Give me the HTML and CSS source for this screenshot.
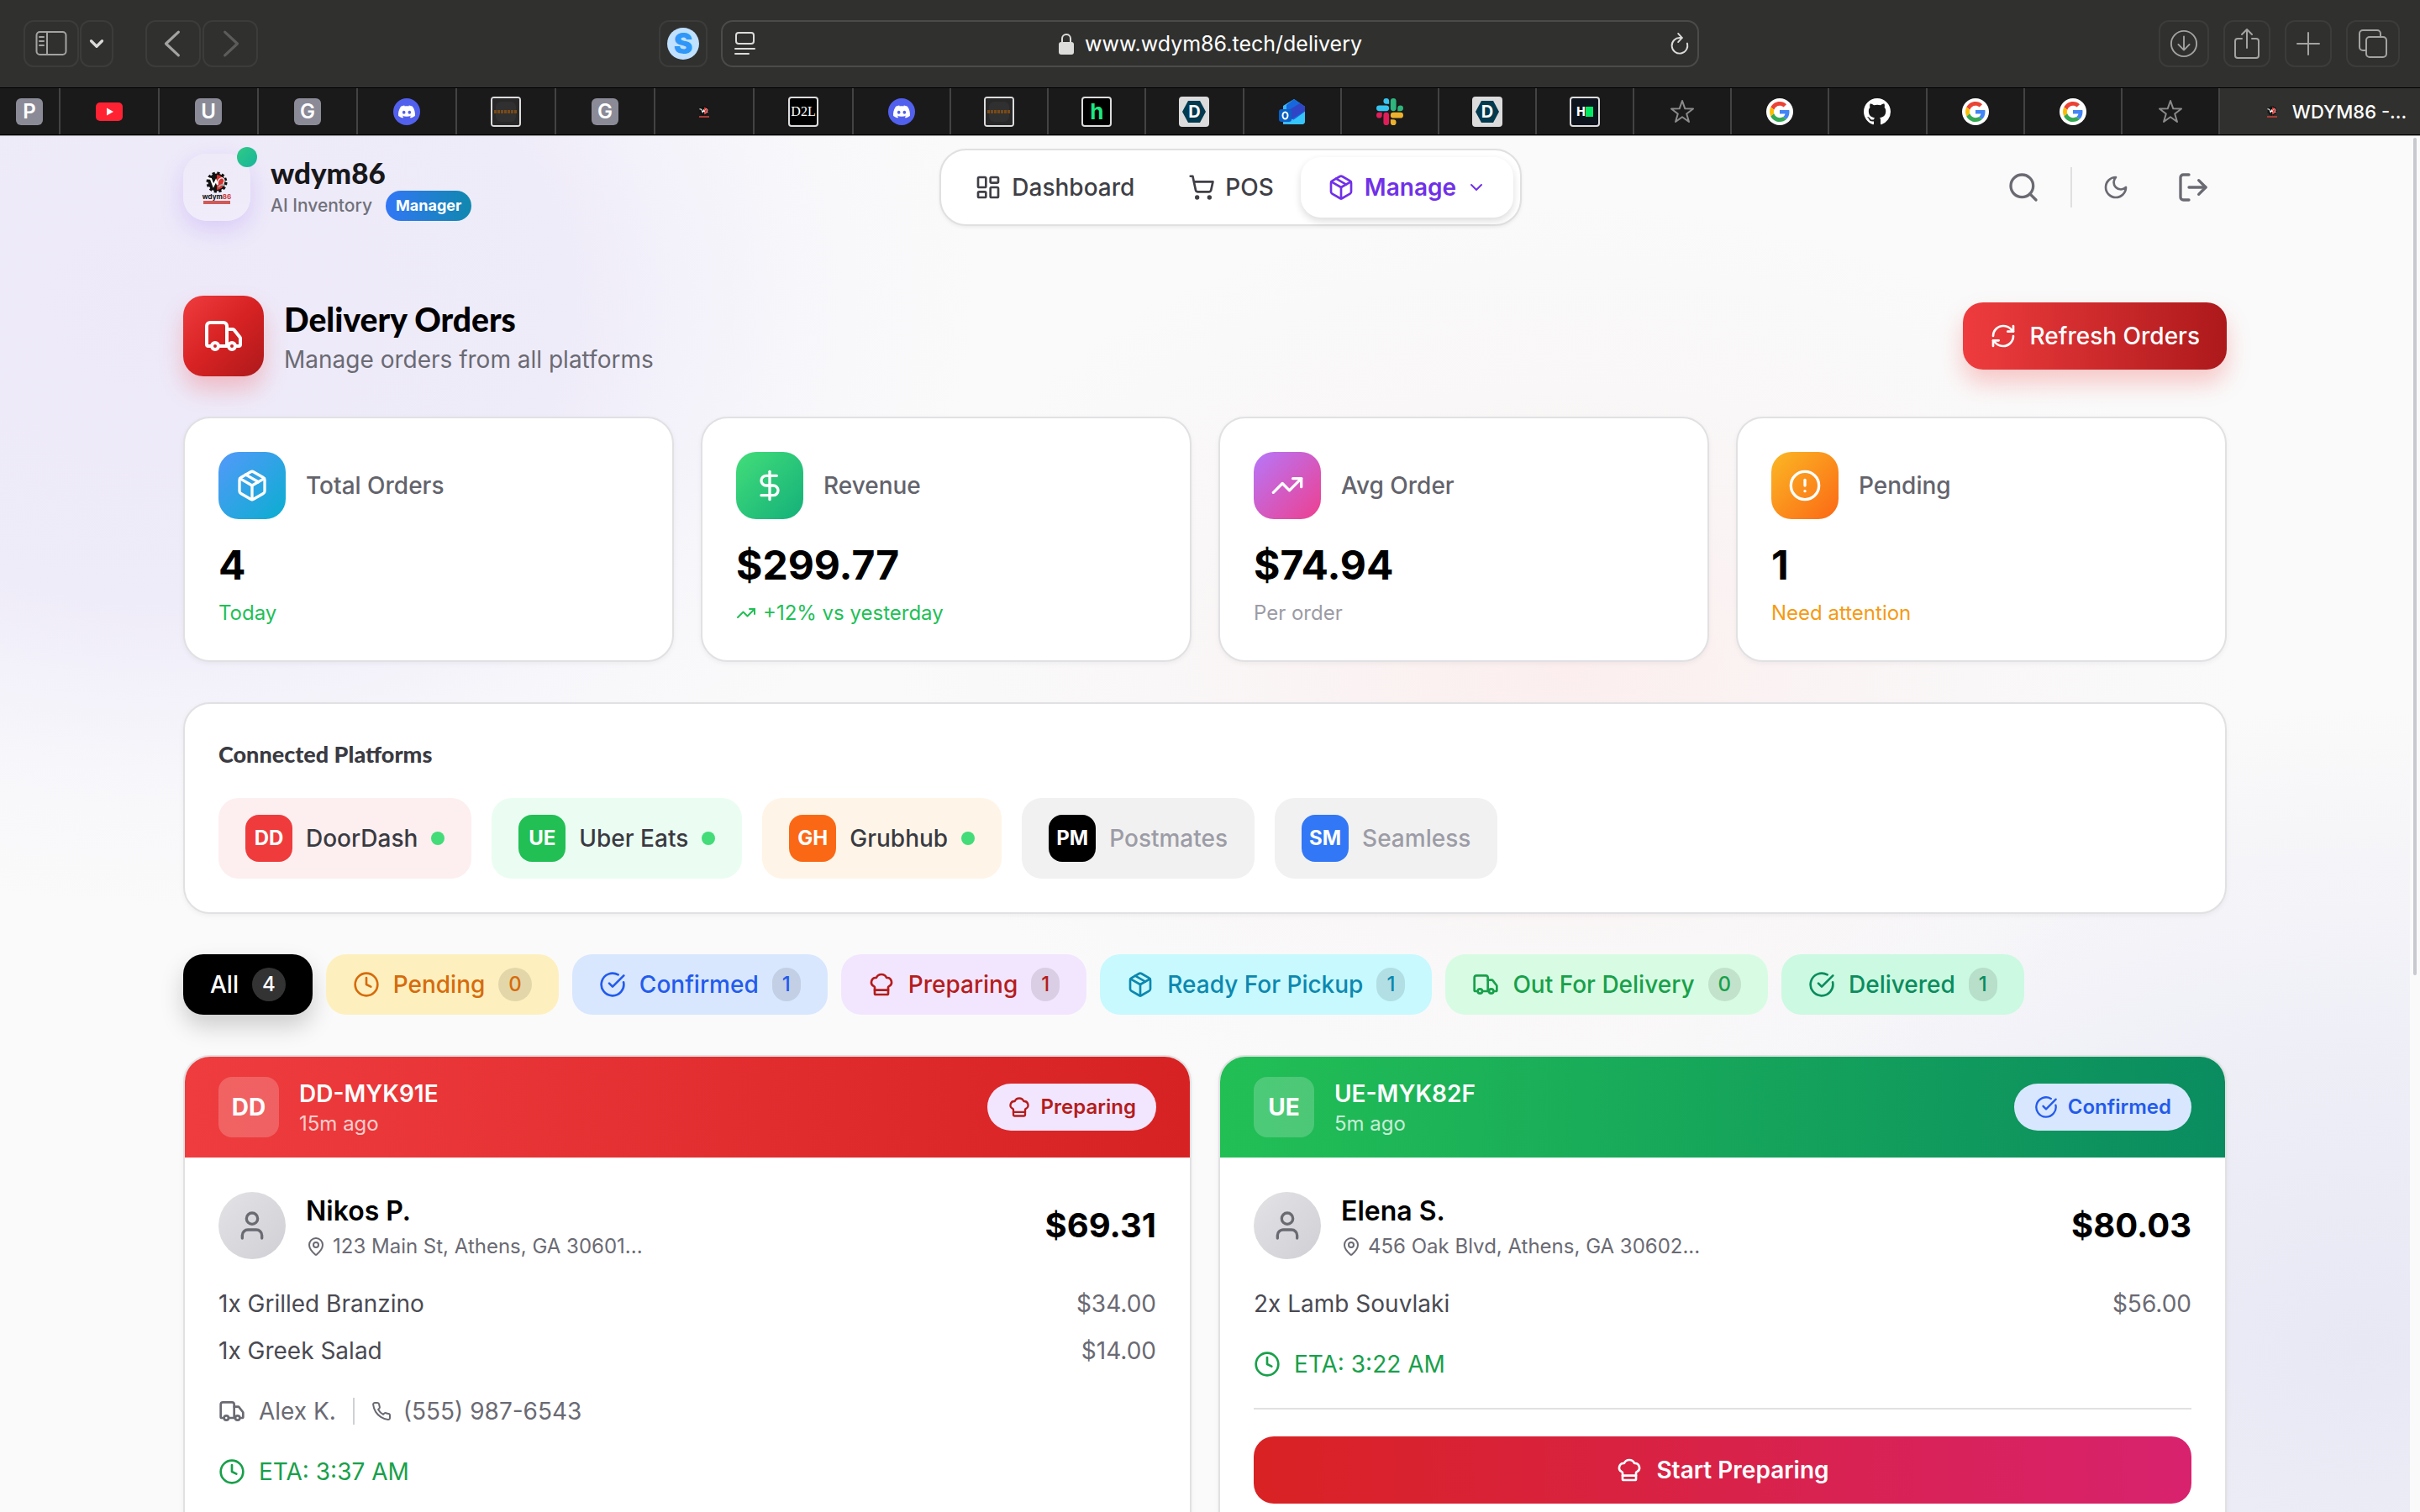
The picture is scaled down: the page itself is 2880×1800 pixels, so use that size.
FILE: index.html
```html
<!DOCTYPE html>
<html lang="en">
<head>
    <meta charset="UTF-8">
    <meta name="viewport" content="width=device-width, initial-scale=1.0">
    <title>WDYM86 - Delivery Orders</title>
    <link rel="stylesheet" href="styles.css">
</head>
<body>
    <!-- icon sprite -->
    <svg class="sprite" xmlns="http://www.w3.org/2000/svg">
        <symbol id="i-package" viewBox="0 0 24 24"><path d="m7.5 4.27 9 5.15"/><path d="M21 8a2 2 0 0 0-1-1.73l-7-4a2 2 0 0 0-2 0l-7 4A2 2 0 0 0 3 8v8a2 2 0 0 0 1 1.73l7 4a2 2 0 0 0 2 0l7-4A2 2 0 0 0 21 16Z"/><path d="m3.3 7 8.7 5 8.7-5"/><path d="M12 22V12"/></symbol>
        <symbol id="i-truck" viewBox="0 0 24 24"><path d="M14 18V6a2 2 0 0 0-2-2H4a2 2 0 0 0-2 2v11a1 1 0 0 0 1 1h2"/><path d="M15 18H9"/><path d="M19 18h2a1 1 0 0 0 1-1v-3.65a1 1 0 0 0-.22-.624l-3.48-4.35A1 1 0 0 0 17.52 8H14"/><circle cx="17" cy="18" r="2"/><circle cx="7" cy="18" r="2"/></symbol>
        <symbol id="i-chef" viewBox="0 0 24 24"><path d="M17 21a1 1 0 0 0 1-1v-5.35c0-.457.316-.844.727-1.041a4 4 0 0 0-2.134-7.589 5 5 0 0 0-9.186 0 4 4 0 0 0-2.134 7.588c.411.198.727.585.727 1.041V20a1 1 0 0 0 1 1Z"/><path d="M6 17h12"/></symbol>
        <symbol id="i-check" viewBox="0 0 24 24"><path d="M21.801 10A10 10 0 1 1 17 3.335"/><path d="m9 11 3 3L22 4"/></symbol>
        <symbol id="i-clock" viewBox="0 0 24 24"><circle cx="12" cy="12" r="10"/><path d="M12 6v6l4 2"/></symbol>
        <symbol id="i-alert" viewBox="0 0 24 24"><circle cx="12" cy="12" r="10"/><path d="M12 8v4"/><path d="M12 16h.01"/></symbol>
        <symbol id="i-refresh" viewBox="0 0 24 24"><path d="M3 12a9 9 0 0 1 9-9 9.75 9.75 0 0 1 6.74 2.74L21 8"/><path d="M21 3v5h-5"/><path d="M21 12a9 9 0 0 1-9 9 9.75 9.75 0 0 1-6.74-2.74L3 16"/><path d="M8 16H3v5"/></symbol>
        <symbol id="i-trend" viewBox="0 0 24 24"><path d="M16 7h6v6"/><path d="m22 7-8.5 8.5-5-5L2 17"/></symbol>
        <symbol id="i-dollar" viewBox="0 0 24 24"><path d="M12 2v20"/><path d="M17 5H9.5a3.5 3.5 0 0 0 0 7h5a3.5 3.5 0 0 1 0 7H6"/></symbol>
        <symbol id="i-phone" viewBox="0 0 24 24"><path d="M22 16.92v3a2 2 0 0 1-2.18 2 19.79 19.79 0 0 1-8.63-3.07 19.5 19.5 0 0 1-6-6 19.79 19.79 0 0 1-3.07-8.67A2 2 0 0 1 4.11 2h3a2 2 0 0 1 2 1.72 12.84 12.84 0 0 0 .7 2.81 2 2 0 0 1-.45 2.11L8.09 9.91a16 16 0 0 0 6 6l1.27-1.27a2 2 0 0 1 2.11-.45 12.84 12.84 0 0 0 2.81.7A2 2 0 0 1 22 16.92z"/></symbol>
        <symbol id="i-pin" viewBox="0 0 24 24"><path d="M20 10c0 4.993-5.539 10.193-7.399 11.799a1 1 0 0 1-1.202 0C9.539 20.193 4 14.993 4 10a8 8 0 0 1 16 0"/><circle cx="12" cy="10" r="3"/></symbol>
        <symbol id="i-user" viewBox="0 0 24 24"><path d="M19 21v-2a4 4 0 0 0-4-4H9a4 4 0 0 0-4 4v2"/><circle cx="12" cy="7" r="4"/></symbol>
        <symbol id="i-moon" viewBox="0 0 24 24"><path d="M12 3a6 6 0 0 0 9 9 9 9 0 1 1-9-9Z"/></symbol>
        <symbol id="i-logout" viewBox="0 0 24 24"><path d="M9 21H5a2 2 0 0 1-2-2V5a2 2 0 0 1 2-2h4"/><path d="m16 17 5-5-5-5"/><path d="M21 12H9"/></symbol>
        <symbol id="i-search" viewBox="0 0 24 24"><circle cx="11" cy="11" r="8"/><path d="m21 21-4.3-4.3"/></symbol>
        <symbol id="i-cart" viewBox="0 0 24 24"><circle cx="8" cy="21" r="1"/><circle cx="19" cy="21" r="1"/><path d="M2.05 2.05h2l2.66 12.42a2 2 0 0 0 2 1.58h9.78a2 2 0 0 0 1.95-1.57l1.65-7.43H5.12"/></symbol>
        <symbol id="i-dashboard" viewBox="0 0 24 24"><rect width="7" height="9" x="3" y="3" rx="1"/><rect width="7" height="5" x="14" y="3" rx="1"/><rect width="7" height="9" x="14" y="12" rx="1"/><rect width="7" height="5" x="3" y="16" rx="1"/></symbol>
        <symbol id="i-chevron" viewBox="0 0 24 24"><path d="m6 9 6 6 6-6"/></symbol>

        <!-- favicons -->
        <symbol id="f-youtube" viewBox="0 0 32 32"><rect y="5" width="32" height="22" rx="5" fill="#ff2233"/><path d="M13 11.500v9l8-4.500z" fill="#fff"/></symbol>
        <symbol id="f-discord" viewBox="0 0 32 32"><circle cx="16" cy="16" r="16" fill="#5260ee"/><path transform="translate(6 6) scale(.833)" fill="#fff" d="M20.317 4.3698a19.7913 19.7913 0 00-4.8851-1.5152.0741.0741 0 00-.0785.0371c-.211.3753-.4447.8648-.6083 1.2495-1.8447-.2762-3.68-.2762-5.4868 0-.1636-.3933-.4058-.8742-.6177-1.2495a.077.077 0 00-.0785-.037 19.7363 19.7363 0 00-4.8852 1.515.0699.0699 0 00-.0321.0277C.5334 9.0458-.319 13.5799.0992 18.0578a.0824.0824 0 00.0312.0561c2.0528 1.5076 4.0413 2.4228 5.9929 3.0294a.0777.0777 0 00.0842-.0276c.4616-.6304.8731-1.2952 1.226-1.9942a.076.076 0 00-.0416-.1057c-.6528-.2476-1.2743-.5495-1.8722-.8923a.077.077 0 01-.0076-.1277c.1258-.0943.2517-.1923.3718-.2914a.0743.0743 0 01.0776-.0105c3.9278 1.7933 8.18 1.7933 12.0614 0a.0739.0739 0 01.0785.0095c.1202.099.246.1981.3728.2924a.077.077 0 01-.0066.1276 12.2986 12.2986 0 01-1.873.8914.0766.0766 0 00-.0407.1067c.3604.698.7719 1.3628 1.225 1.9932a.076.076 0 00.0842.0286c1.961-.6067 3.9495-1.5219 6.0023-3.0294a.077.077 0 00.0313-.0552c.5004-5.177-.8382-9.6739-3.5485-13.6604a.061.061 0 00-.0312-.0286zM8.02 15.3312c-1.1825 0-2.1569-1.0857-2.1569-2.419 0-1.3332.9555-2.4189 2.157-2.4189 1.2108 0 2.1757 1.0952 2.1568 2.419 0 1.3332-.9555 2.4189-2.1569 2.4189zm7.9748 0c-1.1825 0-2.1569-1.0857-2.1569-2.419 0-1.3332.9554-2.4189 2.1569-2.4189 1.2108 0 2.1757 1.0952 2.1568 2.419 0 1.3332-.946 2.4189-2.1568 2.4189Z"/></symbol>
        <symbol id="f-google" viewBox="0 0 32 32"><circle cx="16" cy="16" r="16" fill="#fff"/><g transform="translate(4 4) scale(.5)"><path fill="#EA4335" d="M24 9.500c3.540 0 6.710 1.220 9.210 3.600l6.850-6.850C35.900 2.380 30.470 0 24 0 14.620 0 6.510 5.380 2.560 13.220l7.980 6.190C12.430 13.720 17.740 9.500 24 9.500z"/><path fill="#4285F4" d="M46.980 24.550c0-1.570-.15-3.090-.38-4.550H24v9.020h12.940c-.58 2.960-2.260 5.480-4.780 7.180l7.730 6c4.510-4.180 7.090-10.360 7.090-17.650z"/><path fill="#FBBC05" d="M10.530 28.590c-.48-1.450-.76-2.990-.76-4.590s.27-3.140.76-4.590l-7.980-6.190C.92 16.460 0 20.120 0 24c0 3.880.92 7.540 2.560 10.780l7.970-6.190z"/><path fill="#34A853" d="M24 48c6.480 0 11.930-2.130 15.890-5.810l-7.730-6c-2.150 1.450-4.920 2.300-8.160 2.300-6.260 0-11.570-4.220-13.470-9.910l-7.980 6.190C6.510 42.620 14.620 48 24 48z"/></g></symbol>
        <symbol id="f-github" viewBox="0 0 16 16"><path fill="#fff" d="M8 0C3.58 0 0 3.58 0 8c0 3.54 2.29 6.53 5.47 7.59.4.07.55-.17.55-.38 0-.19-.01-.82-.01-1.49-2.01.37-2.53-.49-2.69-.94-.09-.23-.48-.94-.82-1.13-.28-.15-.68-.52-.01-.53.63-.01 1.08.58 1.23.82.72 1.21 1.87.87 2.33.66.07-.52.28-.87.51-1.07-1.78-.2-3.64-.89-3.64-3.95 0-.87.31-1.59.82-2.15-.08-.2-.36-1.02.08-2.12 0 0 .67-.21 2.2.82.64-.18 1.32-.27 2-.27s1.36.09 2 .27c1.53-1.04 2.2-.82 2.2-.82.44 1.1.16 1.92.08 2.12.51.56.82 1.27.82 2.15 0 3.07-1.87 3.75-3.65 3.95.29.25.54.73.54 1.48 0 1.07-.01 1.93-.01 2.2 0 .21.15.46.55.38A8.01 8.01 0 0 0 16 8c0-4.42-3.58-8-8-8"/></symbol>
        <symbol id="f-slack" viewBox="0 0 24 24"><path fill="#e01e5a" d="M5.042 15.165a2.528 2.528 0 0 1-2.52 2.523A2.528 2.528 0 0 1 0 15.165a2.527 2.527 0 0 1 2.522-2.52h2.520v2.520zM6.313 15.165a2.527 2.527 0 0 1 2.521-2.520 2.527 2.527 0 0 1 2.521 2.520v6.313A2.528 2.528 0 0 1 8.834 24a2.528 2.528 0 0 1-2.521-2.522v-6.313z"/><path fill="#36c5f0" d="M8.834 5.042a2.528 2.528 0 0 1-2.521-2.520A2.528 2.528 0 0 1 8.834 0a2.528 2.528 0 0 1 2.521 2.522v2.520H8.834zM8.834 6.313a2.528 2.528 0 0 1 2.521 2.521 2.528 2.528 0 0 1-2.521 2.521H2.522A2.528 2.528 0 0 1 0 8.834a2.528 2.528 0 0 1 2.522-2.521h6.312z"/><path fill="#2eb67d" d="M18.956 8.834a2.528 2.528 0 0 1 2.522-2.521A2.528 2.528 0 0 1 24 8.834a2.528 2.528 0 0 1-2.522 2.521h-2.522V8.834zM17.688 8.834a2.528 2.528 0 0 1-2.523 2.521 2.527 2.527 0 0 1-2.520-2.521V2.522A2.527 2.527 0 0 1 15.165 0a2.528 2.528 0 0 1 2.523 2.522v6.312z"/><path fill="#ecb22e" d="M15.165 18.956a2.528 2.528 0 0 1 2.523 2.522A2.528 2.528 0 0 1 15.165 24a2.527 2.527 0 0 1-2.520-2.522v-2.522h2.520zM15.165 17.688a2.527 2.527 0 0 1-2.520-2.523 2.526 2.526 0 0 1 2.520-2.520h6.313A2.527 2.527 0 0 1 24 15.165a2.528 2.528 0 0 1-2.522 2.523h-6.313z"/></symbol>
        <symbol id="f-outlook" viewBox="0 0 32 32"><path d="M5 9 18 1l13 9v17a4 4 0 0 1-4 4H5z" fill="#3bb8fb"/><path d="M9 8 18 1l13 9v6L18 26 9 20z" fill="#1668dc"/><path d="M12 14 25 6l6 4v5L12 27z" fill="#2f45c5"/><path d="M10 31 31 16v11a4 4 0 0 1-4 4z" fill="#35c5fa"/><rect y="13" width="15" height="15" rx="3" fill="#0b5fc4"/><ellipse cx="7.500" cy="20.500" rx="3" ry="4" fill="none" stroke="#fff" stroke-width="2"/></symbol>
        <symbol id="f-star" viewBox="0 0 32 32"><path d="m16 3 3.300 9.300 9.700.2-7.800 6 2.800 9.500-8-5.700-8 5.700 2.800-9.500-7.800-6 9.700-.2z" fill="none" stroke="#8b8b8b" stroke-width="2" stroke-linejoin="round"/></symbol>
        <symbol id="f-bronze" viewBox="0 0 32 32"><rect width="32" height="32" fill="#282828"/><rect x="4" y="4" width="24" height="24" rx="6" fill="#303030"/><path d="M2 16h28" stroke="#7a4a17" stroke-width="4" stroke-dasharray="3 1"/></symbol>
        <symbol id="f-hex" viewBox="0 0 32 32"><path d="M9 3h14l7 13-7 13H9L2 16z" fill="#023a4f"/></symbol>
        <symbol id="brand" viewBox="0 0 26 26">
            <circle cx="13" cy="13" r="11" fill="none" stroke="#111" stroke-width="3" stroke-dasharray="3.200 2.560"/>
            <circle cx="13" cy="13" r="10.500" fill="#111"/>
            <path d="M13 4a9 9 0 0 1 0 18z" fill="#d8322f"/>
            <path d="m1 8 5 1 3 8 3-6 2 5" fill="none" stroke="#fff" stroke-width="2.200"/>
            <path d="M14 15c0-7 7-10 8-4 0 3-2 2-1 6" fill="none" stroke="#eee" stroke-width="1.400"/>
            <path d="M15 19c2-4 5-3 8-2" fill="none" stroke="#aaa" stroke-width="2"/>
        </symbol>
    </svg>

    <div class="browser">
        <div class="toolbar">
            <div class="tools-left">
                <button class="tool sidebar" aria-label="Sidebar"><svg viewBox="0 0 38 32"><rect x="1.500" y="2" width="35" height="27" rx="4"/><path d="M14 2v27M5 8h5M5 13h5M5 18h5"/></svg></button>
                <button class="tool menu" aria-label="Tab groups"><svg viewBox="0 0 24 24"><path d="m6 9 6 6 6-6" stroke-width="3"/></svg></button>
                <button class="tool back" aria-label="Back"><svg viewBox="0 0 32 32"><path d="M22 3 8 16l14 13"/></svg></button>
                <button class="tool forward" aria-label="Forward"><svg viewBox="0 0 32 32"><path d="m10 3 14 13-14 13"/></svg></button>
                <button class="tool ext" aria-label="Extension"><span class="ext-logo">S</span></button>
            </div>
            <div class="address">
                <svg class="reader" viewBox="0 0 26 28"><rect x="2" y="1" width="21" height="13" rx="3"/><path d="M1 20h23M1 26h16"/></svg>
                <div class="address-text">
                    <svg class="lock" viewBox="0 0 20 26"><rect x="1" y="11" width="18" height="15" rx="3" fill="#dcdcdb"/><path d="M5 12V7a5 5 0 0 1 10 0v5" fill="none" stroke="#dcdcdb" stroke-width="2"/></svg>
                    <input class="url" type="text" value="www.wdym86.tech/delivery" aria-label="Address">
                </div>
                <button class="reload" aria-label="Reload"><svg viewBox="0 0 26 30"><path d="M22.500 14.500a10 10 0 1 1-9-7h2"/><path d="m11 2 5 5.500-5 5.500"/></svg></button>
            </div>
            <div class="tools-right">
                <button class="tool" aria-label="Downloads"><svg viewBox="0 0 36 36"><circle cx="18" cy="18" r="16"/><path d="M18 9v17m-7-7 7 7 7-7"/></svg></button>
                <button class="tool share" aria-label="Share"><svg viewBox="0 0 32 38"><path d="M10 13H5a3 3 0 0 0-3 3v17a3 3 0 0 0 3 3h22a3 3 0 0 0 3-3V16a3 3 0 0 0-3-3h-5M16 24V2m-6 6 6-6 6 6"/></svg></button>
                <button class="tool plus" aria-label="New tab"><svg viewBox="0 0 28 28"><path d="M14 1v26M1 14h26"/></svg></button>
                <button class="tool overview" aria-label="Tab overview"><svg viewBox="0 0 36 36"><rect x="10" y="10" width="24" height="24" rx="4"/><path d="M10 26H6a4 4 0 0 1-4-4V6a4 4 0 0 1 4-4h17a4 4 0 0 1 4 4v4"/></svg></button>
            </div>
        </div>
        <div class="tabs">
            <div class="tab tab-first"><span class="letter">P</span></div>
            <div class="tab tab-wide"><svg><use href="#f-youtube"/></svg></div>
            <div class="tab tab-wide"><span class="letter">U</span></div>
            <div class="tab tab-wide"><span class="letter">G</span></div>
            <div class="tab tab-wide"><svg><use href="#f-discord"/></svg></div>
            <div class="tab tab-wide"><span class="framed"><svg><use href="#f-bronze"/></svg></span></div>
            <div class="tab tab-wide"><span class="letter">G</span></div>
            <div class="tab tab-wide"><span class="mini"><svg><use href="#brand"/></svg></span></div>
            <div class="tab tab-wide"><span class="framed d2l">D2L</span></div>
            <div class="tab"><svg><use href="#f-discord"/></svg></div>
            <div class="tab"><span class="framed"><svg><use href="#f-bronze"/></svg></span></div>
            <div class="tab"><span class="framed hulu">h</span></div>
            <div class="tab"><span class="framed hex"><svg><use href="#f-hex"/></svg><b>D</b></span></div>
            <div class="tab"><svg><use href="#f-outlook"/></svg></div>
            <div class="tab"><svg><use href="#f-slack"/></svg></div>
            <div class="tab"><span class="framed hex"><svg><use href="#f-hex"/></svg><b>D</b></span></div>
            <div class="tab"><span class="framed rank">H<i></i></span></div>
            <div class="tab"><svg><use href="#f-star"/></svg></div>
            <div class="tab"><svg><use href="#f-google"/></svg></div>
            <div class="tab"><svg><use href="#f-github"/></svg></div>
            <div class="tab"><svg><use href="#f-google"/></svg></div>
            <div class="tab"><svg><use href="#f-google"/></svg></div>
            <div class="tab"><svg><use href="#f-star"/></svg></div>
            <div class="tab tab-active"><span class="mini"><svg><use href="#brand"/></svg></span>WDYM86 -...</div>
        </div>
    </div>

    <div class="viewport">
        <div class="page">
            <header class="topbar">
                <a class="brand" href="#">
                    <span class="brand-logo">
                        <svg><use href="#brand"/></svg>
                        <span class="brand-word">wdym<em>86</em></span>
                        <span class="brand-line"></span>
                        <span class="online"></span>
                    </span>
                    <span class="brand-text">
                        <span class="brand-name">wdym86</span>
                        <span class="brand-sub">AI Inventory <span class="role">Manager</span></span>
                    </span>
                </a>
                <nav class="nav">
                    <a class="nav-link" href="#"><svg class="icon"><use href="#i-dashboard"/></svg>Dashboard</a>
                    <a class="nav-link" href="#"><svg class="icon"><use href="#i-cart"/></svg>POS</a>
                    <button class="nav-link active"><svg class="icon"><use href="#i-package"/></svg>Manage<svg class="icon icon-sm"><use href="#i-chevron"/></svg></button>
                </nav>
                <div class="actions">
                    <button class="action" aria-label="Search"><svg class="icon icon-lg"><use href="#i-search"/></svg></button>
                    <span class="rule"></span>
                    <button class="action" aria-label="Dark mode"><svg class="icon"><use href="#i-moon"/></svg></button>
                    <button class="action" aria-label="Log out"><svg class="icon icon-lg"><use href="#i-logout"/></svg></button>
                </div>
            </header>

            <main>
                <section class="heading">
                    <span class="heading-icon"><svg class="icon icon-xl"><use href="#i-truck"/></svg></span>
                    <div>
                        <h1>Delivery Orders</h1>
                        <p>Manage orders from all platforms</p>
                    </div>
                    <button class="refresh"><svg class="icon"><use href="#i-refresh"/></svg>Refresh Orders</button>
                </section>

                <section class="stats">
                    <div class="card stat">
                        <div class="stat-head"><span class="stat-icon blue"><svg class="icon icon-lg"><use href="#i-package"/></svg></span>Total Orders</div>
                        <div class="stat-value">4</div>
                        <div class="stat-note green-text">Today</div>
                    </div>
                    <div class="card stat">
                        <div class="stat-head"><span class="stat-icon green"><svg class="icon icon-lg"><use href="#i-dollar"/></svg></span>Revenue</div>
                        <div class="stat-value">$299.77</div>
                        <div class="stat-note green-text"><svg class="icon icon-sm"><use href="#i-trend"/></svg>+12% vs yesterday</div>
                    </div>
                    <div class="card stat">
                        <div class="stat-head"><span class="stat-icon purple"><svg class="icon icon-lg"><use href="#i-trend"/></svg></span>Avg Order</div>
                        <div class="stat-value">$74.94</div>
                        <div class="stat-note">Per order</div>
                    </div>
                    <div class="card stat">
                        <div class="stat-head"><span class="stat-icon orange"><svg class="icon icon-lg"><use href="#i-alert"/></svg></span>Pending</div>
                        <div class="stat-value">1</div>
                        <div class="stat-note amber-text">Need attention</div>
                    </div>
                </section>

                <section class="card platforms">
                    <h2>Connected Platforms</h2>
                    <div class="chips">
                        <div class="chip doordash"><b>DD</b>DoorDash<i class="dot"></i></div>
                        <div class="chip uber"><b>UE</b>Uber Eats<i class="dot"></i></div>
                        <div class="chip grubhub"><b>GH</b>Grubhub<i class="dot"></i></div>
                        <div class="chip postmates"><b>PM</b>Postmates</div>
                        <div class="chip seamless"><b>SM</b>Seamless</div>
                    </div>
                </section>

                <section class="filters">
                    <button class="filter all">All<span>4</span></button>
                    <button class="filter pending"><svg class="icon"><use href="#i-clock"/></svg>Pending<span>0</span></button>
                    <button class="filter confirmed"><svg class="icon"><use href="#i-check"/></svg>Confirmed<span>1</span></button>
                    <button class="filter preparing"><svg class="icon"><use href="#i-chef"/></svg>Preparing<span>1</span></button>
                    <button class="filter ready"><svg class="icon"><use href="#i-package"/></svg>Ready For Pickup<span>1</span></button>
                    <button class="filter out"><svg class="icon"><use href="#i-truck"/></svg>Out For Delivery<span>0</span></button>
                    <button class="filter delivered"><svg class="icon"><use href="#i-check"/></svg>Delivered<span>1</span></button>
                </section>

                <section class="orders">
                    <article class="card order">
                        <div class="order-head red-head">
                            <b class="order-logo">DD</b>
                            <div>
                                <h3>DD-MYK91E</h3>
                                <p>15m ago</p>
                            </div>
                            <span class="status preparing"><svg class="icon"><use href="#i-chef"/></svg>Preparing</span>
                        </div>
                        <div class="order-body">
                            <div class="customer">
                                <span class="avatar"><svg class="icon icon-lg"><use href="#i-user"/></svg></span>
                                <div class="who">
                                    <h4>Nikos P.</h4>
                                    <p><svg class="icon icon-sm"><use href="#i-pin"/></svg>123 Main St, Athens, GA 30601...</p>
                                </div>
                                <strong>$69.31</strong>
                            </div>
                            <ul class="items">
                                <li>1x Grilled Branzino<span>$34.00</span></li>
                                <li>1x Greek Salad<span>$14.00</span></li>
                            </ul>
                            <div class="driver">
                                <svg class="icon"><use href="#i-truck"/></svg>Alex K.
                                <a href="tel:5559876543"><svg class="icon icon-sm"><use href="#i-phone"/></svg>(555) 987-6543</a>
                            </div>
                            <div class="eta"><svg class="icon"><use href="#i-clock"/></svg>ETA: 3:37 AM</div>
                        </div>
                    </article>
                    <article class="card order">
                        <div class="order-head green-head">
                            <b class="order-logo">UE</b>
                            <div>
                                <h3>UE-MYK82F</h3>
                                <p>5m ago</p>
                            </div>
                            <span class="status confirmed"><svg class="icon"><use href="#i-check"/></svg>Confirmed</span>
                        </div>
                        <div class="order-body">
                            <div class="customer">
                                <span class="avatar"><svg class="icon icon-lg"><use href="#i-user"/></svg></span>
                                <div class="who">
                                    <h4>Elena S.</h4>
                                    <p><svg class="icon icon-sm"><use href="#i-pin"/></svg>456 Oak Blvd, Athens, GA 30602...</p>
                                </div>
                                <strong>$80.03</strong>
                            </div>
                            <ul class="items">
                                <li>2x Lamb Souvlaki<span>$56.00</span></li>
                            </ul>
                            <div class="eta"><svg class="icon"><use href="#i-clock"/></svg>ETA: 3:22 AM</div>
                            <div class="order-foot">
                                <button class="start"><svg class="icon"><use href="#i-chef"/></svg>Start Preparing</button>
                            </div>
                        </div>
                    </article>
                </section>
            </main>
        </div>
        <div class="scrollbar"><span></span></div>
    </div>
</body>
</html>
```

FILE: styles.css
```css
* {
    box-sizing: border-box;
    margin: 0;
    padding: 0;
}
body {
    font-family: Inter, "Liberation Sans", sans-serif;
    font-size: 28px;
    line-height: 40px;
    height: 100vh;
    overflow: hidden;
    display: flex;
    flex-direction: column;
    background-color: #fafafa;
    color: #000;
}
button {
    font: inherit;
    border: none;
    background: none;
    color: inherit;
    cursor: pointer;
}
a {
    color: inherit;
    text-decoration: none;
}
ul {
    list-style: none;
}
.sprite {
    position: absolute;
    width: 0;
    height: 0;
}
.icon {
    width: 32px;
    height: 32px;
    flex: none;
    fill: none;
    stroke: currentColor;
    stroke-width: 2;
    stroke-linecap: round;
    stroke-linejoin: round;
}
.icon-sm {
    width: 24px;
    height: 24px;
}
.icon-lg {
    width: 40px;
    height: 40px;
}
.icon-xl {
    width: 48px;
    height: 48px;
}

/* browser window */
.browser {
    flex: none;
    background: #30302e;
    border-bottom: 1px solid #a0a0a0;
}
.toolbar {
    height: 104px;
    padding: 0 24px;
    display: grid;
    grid-template-columns: 1fr minmax(0, 1164px) 1fr;
    align-items: center;
}
.tools-left,
.tools-right {
    display: flex;
    align-items: center;
}
.tools-left {
    padding: 0 16px 0 4px;
}
.tools-right {
    justify-content: flex-end;
    gap: 17px;
}
.tool {
    height: 56px;
    width: 60px;
    border: 2px solid #3c3c3a;
    border-radius: 12px;
    display: flex;
    align-items: center;
    justify-content: center;
    flex: none;
}
.tool svg {
    width: 34px;
    height: 34px;
    fill: none;
    stroke: #a3a3a1;
    stroke-width: 2;
    stroke-linecap: round;
    stroke-linejoin: round;
}
.sidebar {
    width: 66px;
}
.tool.sidebar svg {
    width: 38px;
}
.menu {
    width: 40px;
    margin: 0 38px 0 1px;
}
.tool.menu svg {
    width: 26px;
    stroke: #dadad8;
}
.back,
.forward {
    width: 66px;
    margin-right: 2px;
}
.tool.back svg {
    stroke-width: 3;
}
.tool.forward svg {
    stroke: #5c5c5a;
    stroke-width: 3;
}
.ext {
    width: 58px;
    margin-left: auto;
}
.ext-logo {
    width: 38px;
    height: 38px;
    border-radius: 50%;
    background: #bfe0ff;
    color: #2f97f7;
    font-weight: 900;
    font-size: 34px;
    line-height: 38px;
}
.tool.share,
.tool.plus {
    width: 56px;
}
.tool.share svg {
    height: 38px;
}
.tool.plus svg {
    width: 28px;
}
.tool.overview {
    width: 64px;
}
.tool.overview svg {
    width: 36px;
    height: 36px;
}
.address {
    height: 56px;
    border: 2px solid #4b4b49;
    border-radius: 14px;
    padding: 0 8px 0 14px;
    display: flex;
    align-items: center;
    justify-content: space-between;
}
.reader,
.reload svg {
    width: 26px;
    height: 28px;
    fill: none;
    stroke: #dcdcdb;
    stroke-width: 2;
    stroke-linecap: round;
    display: block;
}
.address-text {
    display: flex;
    align-items: center;
    gap: 12px;
}
.lock {
    width: 20px;
    height: 26px;
}
.url {
    width: 336px;
    border: none;
    outline: none;
    background: none;
    font: 25px Inter, "Liberation Sans", sans-serif;
    color: #fff;
}
.tabs {
    height: 57px;
    display: flex;
    border-top: 1px solid #000;
    border-bottom: 1px solid #000;
}
.tab {
    flex: 1;
    min-width: 0;
    display: flex;
    align-items: center;
    justify-content: center;
    background: #1a1a1a;
    border-right: 2px solid #434343;
}
.tab svg {
    width: 32px;
    height: 32px;
}
.tab-first {
    flex: 0 0 72px;
}
.tab-wide {
    flex: 0 0 118px;
}
.tab-active {
    flex: 0 0 238px;
    background: #30302e;
    border: none;
    color: #fff;
    font-size: 22px;
    font-weight: 500;
    gap: 18px;
    padding-left: 40px;
    white-space: nowrap;
}
.letter {
    width: 32px;
    height: 32px;
    border-radius: 6px;
    background: #8b8b98;
    color: #fff;
    font-size: 24px;
    font-weight: 600;
    line-height: 32px;
    text-align: center;
}
.framed {
    position: relative;
    width: 36px;
    height: 36px;
    border: 2px solid #dcdcdc;
    border-radius: 4px;
    background: #000;
    display: flex;
    align-items: center;
    justify-content: center;
    overflow: hidden;
}
.d2l {
    font: 16px "Liberation Serif", serif;
    color: #fff;
}
.hulu {
    color: #1ce783;
    font-weight: 700;
    font-size: 26px;
}
.hex {
    background: #dcdcdc;
}
.hex b {
    position: absolute;
    color: #fff;
    font-size: 20px;
}
.rank {
    background: #0d141e;
    color: #fff;
    font-weight: 800;
    font-size: 14px;
}
.rank i {
    width: 9px;
    height: 12px;
    background: #00ea64;
}
.mini {
    width: 12px;
    border-bottom: 2px solid #a83c38;
    display: flex;
}
.tab .mini svg {
    width: 12px;
    height: 12px;
}

/* page */
.viewport {
    flex: 1;
    min-height: 0;
    display: flex;
}
.page {
    flex: 1;
    min-width: 0;
    overflow: hidden;
    padding: 15px 32px 0;
    background:
        radial-gradient(ellipse 960px 720px at 7% 12%, #ede9f9 0%, #efecf9 50%, rgba(246, 245, 251, 0.7) 78%, rgba(250, 250, 250, 0) 100%),
        radial-gradient(ellipse 800px 560px at 65% 39%, #fceeee 0%, rgba(249, 245, 246, 0.6) 60%, rgba(250, 250, 250, 0) 100%),
        radial-gradient(ellipse 1000px 760px at 98% 88%, #e8e8f5 0%, #eeeef7 45%, rgba(250, 250, 250, 0) 100%),
        #fafafa;
}
.topbar,
main {
    max-width: 2432px;
    margin: 0 auto;
}
.scrollbar {
    width: 12px;
    background: #fafafa;
    padding: 2px 4px;
}
.scrollbar span {
    display: block;
    height: 61%;
    border-radius: 2px;
    background: #c8c8cf;
}
.topbar {
    display: flex;
    align-items: center;
    justify-content: space-between;
}
.brand {
    display: flex;
    align-items: center;
    gap: 24px;
}
.brand-logo {
    position: relative;
    width: 80px;
    height: 80px;
    border-radius: 28px;
    background: linear-gradient(#eeeaf8, #f0ecfa);
    box-shadow: 0 10px 28px rgba(139, 92, 246, 0.22);
    display: flex;
    flex-direction: column;
    align-items: center;
    justify-content: center;
}
.brand-logo svg {
    width: 26px;
    height: 26px;
}
.brand-word {
    font-size: 8px;
    line-height: 9px;
    font-weight: 700;
    color: #111;
}
.brand-word em {
    font-style: normal;
    color: #d23a35;
}
.brand-line {
    width: 32px;
    height: 4px;
    background: #cf5a58;
}
.online {
    position: absolute;
    top: -8px;
    right: -8px;
    width: 24px;
    height: 24px;
    border-radius: 50%;
    background: linear-gradient(135deg, #2fcb85, #18b49c);
}
.brand-text {
    display: flex;
    flex-direction: column;
}
.brand-name {
    font-family: Lato, sans-serif;
    font-weight: 900;
    font-size: 35px;
    line-height: 44px;
    color: #18181b;
}
.brand-sub {
    display: flex;
    align-items: center;
    gap: 16px;
    font-size: 21px;
    line-height: 36px;
    font-weight: 500;
    color: #71717a;
}
.role {
    padding: 0 12px;
    border-radius: 18px;
    background: linear-gradient(90deg, #3277f6, #1088ae);
    color: #fff;
    font-size: 18px;
    font-weight: 700;
}
.nav {
    display: flex;
    padding: 8px;
    border: 2px solid #e0e0e1;
    border-radius: 32px;
    background: #fff;
    box-shadow: 0 2px 4px rgba(0, 0, 0, 0.06);
}
.nav-link {
    display: flex;
    align-items: center;
    gap: 12px;
    height: 72px;
    padding: 0 32px;
    border-radius: 24px;
    font-weight: 500;
    color: #3f3f46;
}
.nav-link.active {
    font-weight: 600;
    color: #7030e8;
    background: #fff;
    box-shadow: 0 4px 10px rgba(0, 0, 0, 0.14);
}
.actions {
    display: flex;
    align-items: center;
    gap: 16px;
    color: #6a6a73;
}
.action {
    display: flex;
    padding: 20px;
}
.rule {
    width: 2px;
    height: 48px;
    background: #dfdfe2;
}
.heading {
    display: flex;
    align-items: center;
    gap: 24px;
    margin-top: 83px;
}
.heading-icon {
    width: 96px;
    height: 96px;
    border-radius: 24px;
    background: linear-gradient(135deg, #ef3c3e, #d72223 50%, #ad191b);
    box-shadow: 0 16px 28px rgba(239, 68, 68, 0.28);
    color: #fff;
    display: flex;
    align-items: center;
    justify-content: center;
}
h1 {
    font-family: Lato, sans-serif;
    font-size: 39px;
    line-height: 56px;
    font-weight: 900;
}
.heading p {
    color: #6a6a73;
}
.refresh {
    margin-left: auto;
    height: 80px;
    padding: 0 32px;
    border-radius: 24px;
    display: flex;
    align-items: center;
    gap: 16px;
    background: linear-gradient(90deg, #ef3c3e, #ad191b);
    box-shadow: 0 16px 28px rgba(239, 68, 68, 0.28);
    color: #fff;
    font-weight: 500;
}
.card {
    background: #fff;
    border: 2px solid #e1e1e3;
    border-radius: 32px;
    box-shadow: 0 2px 6px rgba(0, 0, 0, 0.05);
}
.stats {
    display: grid;
    grid-template-columns: repeat(4, 1fr);
    gap: 32px;
    margin-top: 48px;
}
.stat {
    padding: 40px;
}
.stat-head {
    display: flex;
    align-items: center;
    gap: 24px;
    font-weight: 500;
    color: #63636c;
}
.stat-icon {
    width: 80px;
    height: 80px;
    border-radius: 24px;
    color: #fff;
    display: flex;
    align-items: center;
    justify-content: center;
}
.blue {
    background: linear-gradient(135deg, #5499fa, #0aaed0);
}
.green {
    background: linear-gradient(135deg, #43dd79, #13b07a);
}
.purple {
    background: linear-gradient(135deg, #b677fa, #ee3f8f);
}
.orange {
    background: linear-gradient(135deg, #fbb824, #fb6815);
}
.stat-value {
    margin-top: 24px;
    font-size: 48px;
    line-height: 62px;
    font-weight: 700;
}
.stat-note {
    margin-top: 10px;
    display: flex;
    align-items: center;
    gap: 8px;
    font-size: 24px;
    line-height: 32px;
    color: #9b9ba5;
}
.stat-note.green-text {
    color: #21bf56;
}
.stat-note.amber-text {
    color: #f59a14;
}
.platforms {
    margin-top: 48px;
    padding: 40px;
}
h2 {
    font-family: Lato, sans-serif;
    font-size: 27px;
    line-height: 40px;
    font-weight: 900;
    color: #3a3a41;
}
.chips {
    display: flex;
    flex-wrap: wrap;
    gap: 24px;
    margin-top: 32px;
}
.chip {
    height: 96px;
    padding: 0 32px;
    border-radius: 24px;
    display: flex;
    align-items: center;
    gap: 16px;
    font-weight: 500;
    color: #3a3a41;
}
.chip b {
    width: 56px;
    height: 56px;
    border-radius: 16px;
    color: #fff;
    font-size: 24px;
    line-height: 56px;
    text-align: center;
}
.dot {
    width: 16px;
    height: 16px;
    border-radius: 50%;
    background: #43dc78;
}
.doordash {
    background: #fdeff0;
}
.doordash b {
    background: #ef3b3c;
}
.uber {
    background: #ebfdf2;
}
.uber b {
    background: #22bf55;
}
.grubhub {
    background: #fef5e8;
}
.grubhub b {
    background: #fb6815;
}
.postmates,
.seamless {
    background: #f1f1f1;
    color: #9c9ca6;
}
.postmates b {
    background: #000;
}
.seamless b {
    background: #3277f6;
}
.filters {
    display: flex;
    flex-wrap: wrap;
    gap: 16px;
    margin-top: 48px;
}
.filter {
    height: 72px;
    padding: 0 32px;
    border-radius: 24px;
    display: flex;
    align-items: center;
    gap: 16px;
    font-weight: 500;
}
.filter span {
    padding: 0 12px;
    border-radius: 20px;
    background: rgba(0, 0, 0, 0.1);
    font-size: 24px;
}
.all {
    background: #000;
    color: #fff;
    box-shadow: 0 14px 28px rgba(0, 0, 0, 0.18);
}
.filter.all span {
    background: #333;
}
.pending {
    background: #fdf0be;
    color: #d66b0c;
}
.confirmed {
    background: #d8e7fe;
    color: #235bec;
}
.preparing {
    background: #f2e6fe;
    color: #b51c1c;
}
.ready {
    background: #c7f9fe;
    color: #0c88af;
}
.out {
    background: #d8fce3;
    color: #18a04a;
}
.delivered {
    background: #ccf9e1;
    color: #0a8c5e;
}
.orders {
    display: grid;
    grid-template-columns: 1fr 1fr;
    gap: 32px;
    margin-top: 48px;
}
.order {
    overflow: hidden;
}
.order-head {
    display: flex;
    align-items: center;
    gap: 24px;
    padding: 24px 40px;
    color: #fff;
}
.red-head {
    background: linear-gradient(90deg, #ef3c3e, #d72223);
}
.green-head {
    background: linear-gradient(90deg, #22bf55, #0a8c60);
}
.order-logo {
    width: 72px;
    height: 72px;
    border-radius: 16px;
    background: rgba(255, 255, 255, 0.2);
    line-height: 72px;
    text-align: center;
}
h3 {
    font-size: 28px;
    line-height: 40px;
    font-weight: 600;
}
.order-head p {
    font-size: 24px;
    line-height: 32px;
    opacity: 0.75;
}
.status {
    margin-left: auto;
    height: 56px;
    padding: 0 24px;
    border-radius: 28px;
    display: flex;
    align-items: center;
    gap: 12px;
    font-size: 24px;
    font-weight: 600;
}
.status .icon {
    width: 28px;
    height: 28px;
}
.order-body {
    padding: 40px;
}
.customer {
    display: flex;
    align-items: center;
    gap: 24px;
}
.avatar {
    width: 80px;
    height: 80px;
    border-radius: 50%;
    background: linear-gradient(135deg, #e3e3e6, #cfcfd5);
    color: #6a6a73;
    display: flex;
    align-items: center;
    justify-content: center;
}
.who {
    display: flex;
    flex-direction: column;
    gap: 2px;
}
h4 {
    font-size: 32px;
    line-height: 48px;
    font-weight: 600;
}
.who p {
    display: flex;
    align-items: center;
    gap: 8px;
    font-size: 24px;
    line-height: 32px;
    color: #6a6a73;
}
.customer strong {
    margin-left: auto;
    font-size: 40px;
    font-weight: 700;
}
.items {
    display: grid;
    gap: 16px;
    margin-top: 32px;
    color: #4a4a52;
}
.items li {
    display: flex;
    justify-content: space-between;
}
.items span {
    color: #6a6a73;
}
.driver,
.eta {
    display: flex;
    align-items: center;
    gap: 16px;
    margin-top: 32px;
    color: #6a6a73;
}
.driver a {
    display: flex;
    align-items: center;
    gap: 14px;
    height: 32px;
    margin-left: 4px;
    padding-left: 20px;
    border-left: 2px solid #d0d0d6;
}
.eta {
    color: #18a04a;
}
.order-foot {
    margin-top: 32px;
    padding-top: 32px;
    border-top: 2px solid #e1e1e3;
}
.start {
    width: 100%;
    height: 80px;
    border-radius: 24px;
    display: flex;
    align-items: center;
    justify-content: center;
    gap: 16px;
    background: linear-gradient(90deg, #d92223, #d8226e);
    color: #fff;
    font-weight: 600;
}
```
